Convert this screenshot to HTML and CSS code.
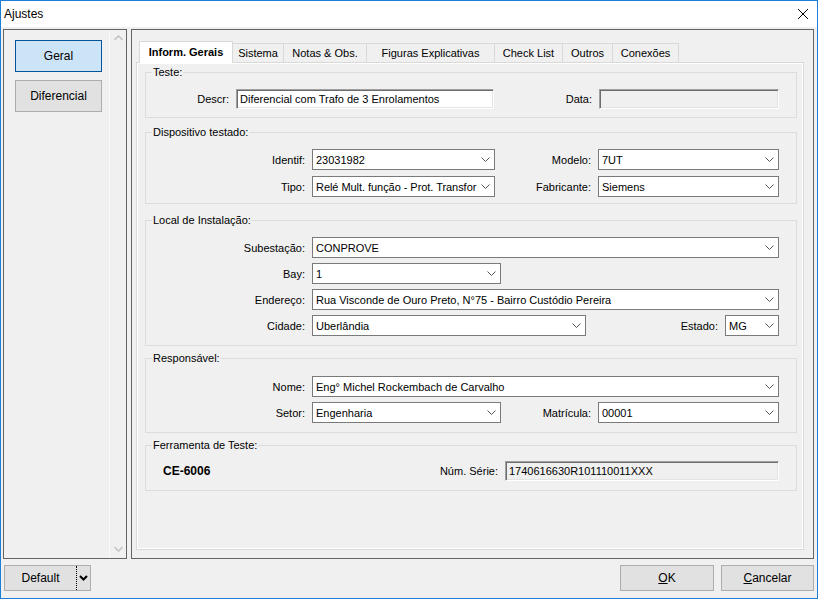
FILE: index.html
```html
<!DOCTYPE html>
<html lang="pt">
<head>
<meta charset="utf-8">
<title>Ajustes</title>
<link rel="stylesheet" href="styles.css">
</head>
<body>
<div class="window">
  <div class="titlebar">
    <span class="title">Ajustes</span>
    <svg class="close" width="10" height="10" viewBox="0 0 10 10"><path d="M0 0L10 10M10 0L0 10" stroke="#000" stroke-width="1" fill="none"/></svg>
  </div>
  <div class="client">
    <div class="main">
      <div class="left-panel">
        <div class="nav">
          <div class="navbtn active">Geral</div>
          <div class="navbtn">Diferencial</div>
        </div>
        <div class="scroll">
          <svg width="9" height="6" viewBox="0 0 9 6"><path d="M0.5 5L4.5 1L8.5 5" stroke="#c4c4c4" stroke-width="1.6" fill="none"/></svg>
          <svg width="9" height="6" viewBox="0 0 9 6"><path d="M0.5 1L4.5 5L8.5 1" stroke="#c4c4c4" stroke-width="1.6" fill="none"/></svg>
        </div>
      </div>
      <div class="right-panel">
        <div class="tabstrip">
          <div class="tab active t1">Inform. Gerais</div>
          <div class="tab t2">Sistema</div>
          <div class="tab t3">Notas &amp; Obs.</div>
          <div class="tab t4">Figuras Explicativas</div>
          <div class="tab t5">Check List</div>
          <div class="tab t6">Outros</div>
          <div class="tab t7">Conexões</div>
        </div>
        <div class="tabpage">
          <fieldset class="group g1">
            <legend>Teste:</legend>
            <div class="row">
              <span class="lab l90">Descr:</span>
              <div class="tbox w258">Diferencial com Trafo de 3 Enrolamentos</div>
              <span class="lab l105">Data:</span>
              <div class="tbox disabled w180"></div>
            </div>
          </fieldset>
          <fieldset class="group g2">
            <legend>Dispositivo testado:</legend>
            <div class="rows gap6">
              <div class="row">
                <span class="lab l166">Identif:</span>
                <div class="combo w183"><span class="val">23031982</span><svg class="chev" width="9" height="5" viewBox="0 0 9 5"><path d="M0.5 0.5L4.5 4.5L8.5 0.5" stroke="#555" fill="none"/></svg></div>
                <span class="lab l103">Modelo:</span>
                <div class="combo w181"><span class="val">7UT</span><svg class="chev" width="9" height="5" viewBox="0 0 9 5"><path d="M0.5 0.5L4.5 4.5L8.5 0.5" stroke="#555" fill="none"/></svg></div>
              </div>
              <div class="row">
                <span class="lab l166">Tipo:</span>
                <div class="combo w183"><span class="val tight">Relé Mult. função - Prot. Transfor</span><svg class="chev" width="9" height="5" viewBox="0 0 9 5"><path d="M0.5 0.5L4.5 4.5L8.5 0.5" stroke="#555" fill="none"/></svg></div>
                <span class="lab l103">Fabricante:</span>
                <div class="combo w181"><span class="val">Siemens</span><svg class="chev" width="9" height="5" viewBox="0 0 9 5"><path d="M0.5 0.5L4.5 4.5L8.5 0.5" stroke="#555" fill="none"/></svg></div>
              </div>
            </div>
          </fieldset>
          <fieldset class="group g3">
            <legend>Local de Instalação:</legend>
            <div class="rows gap5">
              <div class="row">
                <span class="lab l166">Subestação:</span>
                <div class="combo w467"><span class="val">CONPROVE</span><svg class="chev" width="9" height="5" viewBox="0 0 9 5"><path d="M0.5 0.5L4.5 4.5L8.5 0.5" stroke="#555" fill="none"/></svg></div>
              </div>
              <div class="row">
                <span class="lab l166">Bay:</span>
                <div class="combo w189"><span class="val">1</span><svg class="chev" width="9" height="5" viewBox="0 0 9 5"><path d="M0.5 0.5L4.5 4.5L8.5 0.5" stroke="#555" fill="none"/></svg></div>
              </div>
              <div class="row">
                <span class="lab l166">Endereço:</span>
                <div class="combo w467"><span class="val">Rua Visconde de Ouro Preto, N°75 - Bairro Custódio Pereira</span><svg class="chev" width="9" height="5" viewBox="0 0 9 5"><path d="M0.5 0.5L4.5 4.5L8.5 0.5" stroke="#555" fill="none"/></svg></div>
              </div>
              <div class="row">
                <span class="lab l166">Cidade:</span>
                <div class="combo w274"><span class="val">Uberlândia</span><svg class="chev" width="9" height="5" viewBox="0 0 9 5"><path d="M0.5 0.5L4.5 4.5L8.5 0.5" stroke="#555" fill="none"/></svg></div>
                <span class="lab l139">Estado:</span>
                <div class="combo w54"><span class="val">MG</span><svg class="chev" width="9" height="5" viewBox="0 0 9 5"><path d="M0.5 0.5L4.5 4.5L8.5 0.5" stroke="#555" fill="none"/></svg></div>
              </div>
            </div>
          </fieldset>
          <fieldset class="group g4">
            <legend>Responsável:</legend>
            <div class="rows gap5">
              <div class="row">
                <span class="lab l166">Nome:</span>
                <div class="combo w467"><span class="val">Eng° Michel Rockembach de Carvalho</span><svg class="chev" width="9" height="5" viewBox="0 0 9 5"><path d="M0.5 0.5L4.5 4.5L8.5 0.5" stroke="#555" fill="none"/></svg></div>
              </div>
              <div class="row">
                <span class="lab l166">Setor:</span>
                <div class="combo w189"><span class="val">Engenharia</span><svg class="chev" width="9" height="5" viewBox="0 0 9 5"><path d="M0.5 0.5L4.5 4.5L8.5 0.5" stroke="#555" fill="none"/></svg></div>
                <span class="lab l97">Matrícula:</span>
                <div class="combo w181"><span class="val">00001</span><svg class="chev" width="9" height="5" viewBox="0 0 9 5"><path d="M0.5 0.5L4.5 4.5L8.5 0.5" stroke="#555" fill="none"/></svg></div>
              </div>
            </div>
          </fieldset>
          <fieldset class="group g5">
            <legend>Ferramenta de Teste:</legend>
            <div class="row">
              <span class="toolname">CE-6006</span>
              <span class="lab l159">Núm. Série:</span>
              <div class="tbox disabled w274">1740616630R101110011XXX</div>
            </div>
          </fieldset>
        </div>
      </div>
    </div>
    <div class="footer">
      <div class="btn split">
        <span class="split-text">Default</span>
        <span class="split-sep"></span>
        <svg class="split-arrow" width="9" height="6" viewBox="0 0 9 6"><path d="M1 1L4.5 4.5L8 1" stroke="#000" stroke-width="2" fill="none"/></svg>
      </div>
      <div class="spacer"></div>
      <div class="btn ok"><span class="u">O</span>K</div>
      <div class="btn cancel"><span class="u">C</span>ancelar</div>
    </div>
  </div>
</div>
</body>
</html>
```
FILE: styles.css
```css
* { box-sizing: border-box; }
body {
  margin: 0;
  font-family: "Liberation Sans", Arial, sans-serif;
  font-size: 11px;
  color: #000;
  background: #f0f0f0;
}
.window {
  width: 818px;
  height: 599px;
  border: 1px solid #1b80d5;
  background: #f0f0f0;
  display: flex;
  flex-direction: column;
}
.titlebar {
  height: 26px;
  flex: none;
  background: #fff;
  display: flex;
  align-items: center;
  justify-content: space-between;
  padding: 0 9px 0 3px;
  font-size: 12px;
}
.close { display: block; }
.client {
  flex: 1;
  display: flex;
  flex-direction: column;
  padding: 2px 3px 0 2px;
}
.main {
  display: flex;
  gap: 4px;
  height: 530px;
  flex: none;
}
.left-panel {
  width: 124px;
  border: 1px solid #646464;
  display: flex;
}
.nav {
  flex: 1;
  display: flex;
  flex-direction: column;
  gap: 8px;
  padding: 10px 0 0 11px;
}
.navbtn {
  width: 87px;
  height: 32px;
  border: 1px solid #adadad;
  background: #e1e1e1;
  display: flex;
  align-items: center;
  justify-content: center;
  font-size: 12px;
}
.navbtn.active {
  background: #cce4f7;
  border-color: #005499;
}
.scroll {
  width: 17px;
  border-left: 1px solid #fbfbfb;
  display: flex;
  flex-direction: column;
  justify-content: space-between;
  align-items: center;
  padding: 5px 0 6px;
}
.right-panel {
  width: 683px;
  border: 1px solid #646464;
  display: flex;
  flex-direction: column;
  padding: 11px 9px 8px 4px;
}
.tabstrip {
  height: 21px;
  flex: none;
  display: flex;
  align-items: flex-end;
  padding-left: 3px;
  position: relative;
  z-index: 1;
}
.tab {
  height: 19px;
  border: 1px solid #d9d9d9;
  border-bottom: none;
  background: #f0f0f0;
  display: flex;
  align-items: center;
  justify-content: center;
  margin-left: -1px;
  white-space: nowrap;
}
.tab.active {
  height: 22px;
  margin-bottom: -1px;
  margin-left: 0;
  background: #fff;
  font-weight: bold;
  padding-bottom: 2px;
}
.t1 { width: 94px; }
.t2 { width: 52px; }
.t3 { width: 84px; }
.t4 { width: 129px; }
.t5 { width: 69px; }
.t6 { width: 51px; }
.t7 { width: 67px; }
.tabpage {
  flex: 1;
  border: 1px solid #d9d9d9;
  box-shadow: inset 1px 1px 0 #fff, inset -1px -1px 0 #fff;
  padding: 0 6px 0 8px;
}
.group {
  margin: 0;
  padding: 0;
  border: 1px solid #dcdcdc;
  min-width: 0;
}
.group legend {
  padding: 0 1px;
  margin-left: 6px;
  line-height: 13px;
  font-size: 11px;
}
.g1 { margin-top: 3px; padding: 10px 0 8px; }
.g2 { margin-top: 8px; padding: 10px 0 6px; }
.g3 { margin-top: 10px; padding: 10px 0 9px; }
.g4 { margin-top: 6px; padding: 11px 0 9px; }
.g5 { margin-top: 6px; padding: 9px 0 9px; }
.rows { display: flex; flex-direction: column; }
.gap6 { gap: 6px; }
.gap5 { gap: 5px; }
.row {
  display: flex;
  align-items: center;
}
.lab {
  flex: none;
  text-align: right;
  padding-right: 7px;
  white-space: nowrap;
}
.l90 { width: 90px; }
.l105 { width: 105px; }
.l166 { width: 166px; }
.l103 { width: 103px; }
.l139 { width: 139px; }
.l97 { width: 97px; }
.l159 { width: 159px; }
.combo {
  flex: none;
  height: 21px;
  border: 1px solid #7a7a7a;
  background: #fff;
  display: flex;
  align-items: center;
  padding: 0 4px 0 3px;
}
.combo .val {
  flex: 1;
  min-width: 0;
  overflow: hidden;
  white-space: nowrap;
}
.combo .val.tight {
  overflow: visible;
  letter-spacing: -0.05px;
}
.chev { flex: none; margin-left: 2px; display: block; }
.tbox {
  flex: none;
  height: 20px;
  border-style: solid;
  border-width: 1px;
  border-color: #a0a0a0 #ffffff #ffffff #a0a0a0;
  box-shadow: inset 1px 1px 0 #6d6d6d, inset -1px -1px 0 #e3e3e3;
  background: #fff;
  display: flex;
  align-items: center;
  padding-left: 3px;
  white-space: nowrap;
  overflow: hidden;
}
.tbox.disabled { background: #f0f0f0; }
.w258 { width: 258px; }
.w180 { width: 180px; }
.w183 { width: 183px; }
.w181 { width: 181px; }
.w467 { width: 467px; }
.w189 { width: 189px; }
.w274 { width: 274px; }
.w54 { width: 54px; }
.toolname {
  width: 200px;
  flex: none;
  padding-left: 17px;
  font-weight: bold;
  font-size: 12px;
}
.footer {
  margin-top: 6px;
  height: 26px;
  display: flex;
  gap: 7px;
  font-size: 12px;
}
.spacer { flex: 1; }
.btn {
  height: 26px;
  border: 1px solid #adadad;
  background: #e1e1e1;
  display: flex;
  align-items: center;
  justify-content: center;
}
.split {
  width: 87px;
  margin-left: 1px;
  justify-content: flex-start;
}
.split-text {
  width: 71px;
  text-align: center;
}
.split-sep {
  width: 0;
  height: 24px;
  border-left: 1px dotted #000;
}
.split-arrow { margin-left: 2px; display: block; }
.ok { width: 94px; }
.cancel { width: 93px; }
.u { text-decoration: underline; }
```
